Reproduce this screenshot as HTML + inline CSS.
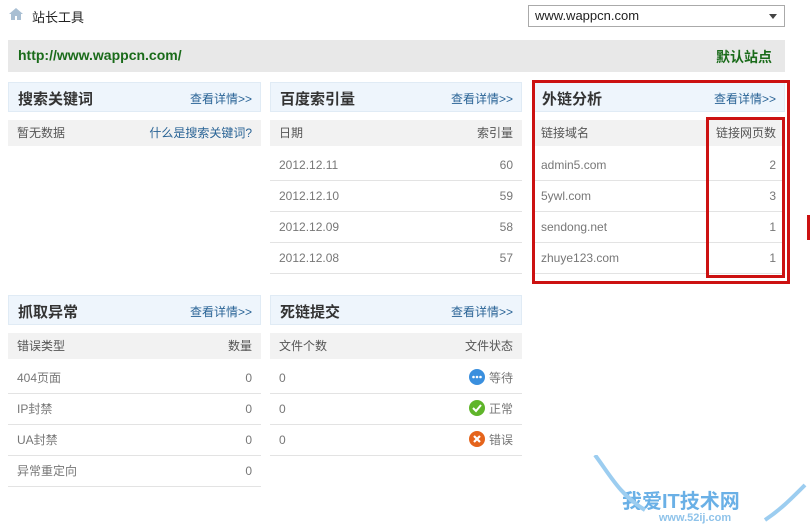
<!DOCTYPE html>
<html><head><meta charset="utf-8"><style>
*{margin:0;padding:0;box-sizing:border-box}
body{width:810px;height:532px;background:#fff;position:relative;overflow:hidden;font-family:"Liberation Sans","Noto Sans CJK SC",sans-serif;font-size:12px;color:#666}
.a{position:absolute}
.hd{position:absolute;height:30px;background:#eef5fc;border:1px solid #e0ebf5}
.hd b{position:absolute;left:9px;top:5px;font-size:15px;color:#333}
.hd i{position:absolute;right:8px;top:7px;font-style:normal;color:#2a6496;font-size:12px}
.ch{position:absolute;height:26px;background:#f2f2f2;line-height:26px;color:#555}
.row{position:absolute;height:31px;line-height:30px;border-bottom:1px solid #e3e3e3;color:#777}
.l{position:absolute;left:9px}.r{position:absolute;right:9px}
.red{position:absolute;border:3px solid #cc1111}
</style></head><body>
<svg class="a" style="left:8px;top:7px" width="16" height="14" viewBox="0 0 16 14"><path d="M8 1L1 7h2v6h4V9h2v4h4V7h2z" fill="#a9bfd3"/></svg>
<div class="a" style="left:32px;top:7px;color:#222;font-size:13px">站长工具</div>
<div class="a" style="left:528px;top:5px;width:257px;height:22px;border:1px solid #aaa;background:#fff;color:#222;font-size:13px;padding:2px 6px">www.wappcn.com<span style="position:absolute;right:7px;top:8px;border:4px solid transparent;border-top:5px solid #444"></span></div>
<div class="a" style="left:8px;top:40px;width:777px;height:32px;background:#e8e8e8"></div>
<div class="a" style="left:18px;top:47px;color:#1a6b1a;font-weight:bold;font-size:14px">http://www.wappcn.com/</div>
<div class="a" style="left:716px;top:47px;color:#1a6b1a;font-weight:bold;font-size:14px">默认站点</div>

<div class="hd" style="left:8px;top:82px;width:253px"><b>搜索关键词</b><i>查看详情&gt;&gt;</i></div>
<div class="ch" style="left:8px;top:120px;width:253px"><span class="l">暂无数据</span><span class="r" style="color:#2a6496">什么是搜索关键词?</span></div>

<div class="hd" style="left:270px;top:82px;width:252px"><b>百度索引量</b><i>查看详情&gt;&gt;</i></div>
<div class="ch" style="left:270px;top:120px;width:252px"><span class="l">日期</span><span class="r">索引量</span></div>
<div class="row" style="left:270px;top:150px;width:252px"><span class="l">2012.12.11</span><span class="r">60</span></div>
<div class="row" style="left:270px;top:181px;width:252px"><span class="l">2012.12.10</span><span class="r">59</span></div>
<div class="row" style="left:270px;top:212px;width:252px"><span class="l">2012.12.09</span><span class="r">58</span></div>
<div class="row" style="left:270px;top:243px;width:252px"><span class="l">2012.12.08</span><span class="r">57</span></div>

<div class="hd" style="left:532px;top:82px;width:253px"><b>外链分析</b><i>查看详情&gt;&gt;</i></div>
<div class="ch" style="left:532px;top:120px;width:253px"><span class="l">链接域名</span><span class="r">链接网页数</span></div>
<div class="row" style="left:532px;top:150px;width:253px"><span class="l">admin5.com</span><span class="r">2</span></div>
<div class="row" style="left:532px;top:181px;width:253px"><span class="l">5ywl.com</span><span class="r">3</span></div>
<div class="row" style="left:532px;top:212px;width:253px"><span class="l">sendong.net</span><span class="r">1</span></div>
<div class="row" style="left:532px;top:243px;width:253px"><span class="l">zhuye123.com</span><span class="r">1</span></div>
<div class="red" style="left:532px;top:80px;width:258px;height:204px"></div>
<div class="red" style="left:706px;top:117px;width:79px;height:161px"></div>
<div class="a" style="left:807px;top:215px;width:3px;height:25px;background:#cc1111"></div>

<div class="hd" style="left:8px;top:295px;width:253px"><b>抓取异常</b><i>查看详情&gt;&gt;</i></div>
<div class="ch" style="left:8px;top:333px;width:253px"><span class="l">错误类型</span><span class="r">数量</span></div>
<div class="row" style="left:8px;top:363px;width:253px"><span class="l">404页面</span><span class="r">0</span></div>
<div class="row" style="left:8px;top:394px;width:253px"><span class="l">IP封禁</span><span class="r">0</span></div>
<div class="row" style="left:8px;top:425px;width:253px"><span class="l">UA封禁</span><span class="r">0</span></div>
<div class="row" style="left:8px;top:456px;width:253px"><span class="l">异常重定向</span><span class="r">0</span></div>

<div class="hd" style="left:270px;top:295px;width:252px"><b>死链提交</b><i>查看详情&gt;&gt;</i></div>
<div class="ch" style="left:270px;top:333px;width:252px"><span class="l">文件个数</span><span class="r">文件状态</span></div>
<div class="row" style="left:270px;top:363px;width:252px"><span class="l">0</span><span class="r"><svg width="16" height="16" style="vertical-align:-3px;margin-right:4px" viewBox="0 0 16 16"><circle cx="8" cy="8" r="8" fill="#3a8fde"/><circle cx="4.5" cy="8" r="1.3" fill="#fff"/><circle cx="8" cy="8" r="1.3" fill="#fff"/><circle cx="11.5" cy="8" r="1.3" fill="#fff"/></svg>等待</span></div>
<div class="row" style="left:270px;top:394px;width:252px"><span class="l">0</span><span class="r"><svg width="16" height="16" style="vertical-align:-3px;margin-right:4px" viewBox="0 0 16 16"><circle cx="8" cy="8" r="8" fill="#5fb52a"/><path d="M4 8l3 3 5-6" stroke="#fff" stroke-width="2" fill="none"/></svg>正常</span></div>
<div class="row" style="left:270px;top:425px;width:252px"><span class="l">0</span><span class="r"><svg width="16" height="16" style="vertical-align:-3px;margin-right:4px" viewBox="0 0 16 16"><circle cx="8" cy="8" r="8" fill="#e5641c"/><path d="M5 5l6 6M11 5l-6 6" stroke="#fff" stroke-width="2.2"/></svg>错误</span></div>

<div class="a" style="left:620px;top:512px;width:150px;text-align:center;color:#8fc3ea;font-size:11px;font-weight:bold">www.52ij.com</div>
<div class="a" style="left:622px;top:485px;color:#6ab0e6;font-size:20px;font-weight:bold">我爱IT技术网</div>
<svg class="a" style="left:590px;top:455px" width="220" height="77" viewBox="0 0 220 77"><path d="M5 0C20 20 30 40 55 55" stroke="#9ccdf0" stroke-width="4" fill="none"/><path d="M215 30C200 45 190 55 175 65" stroke="#9ccdf0" stroke-width="4" fill="none"/></svg>
</body></html>
